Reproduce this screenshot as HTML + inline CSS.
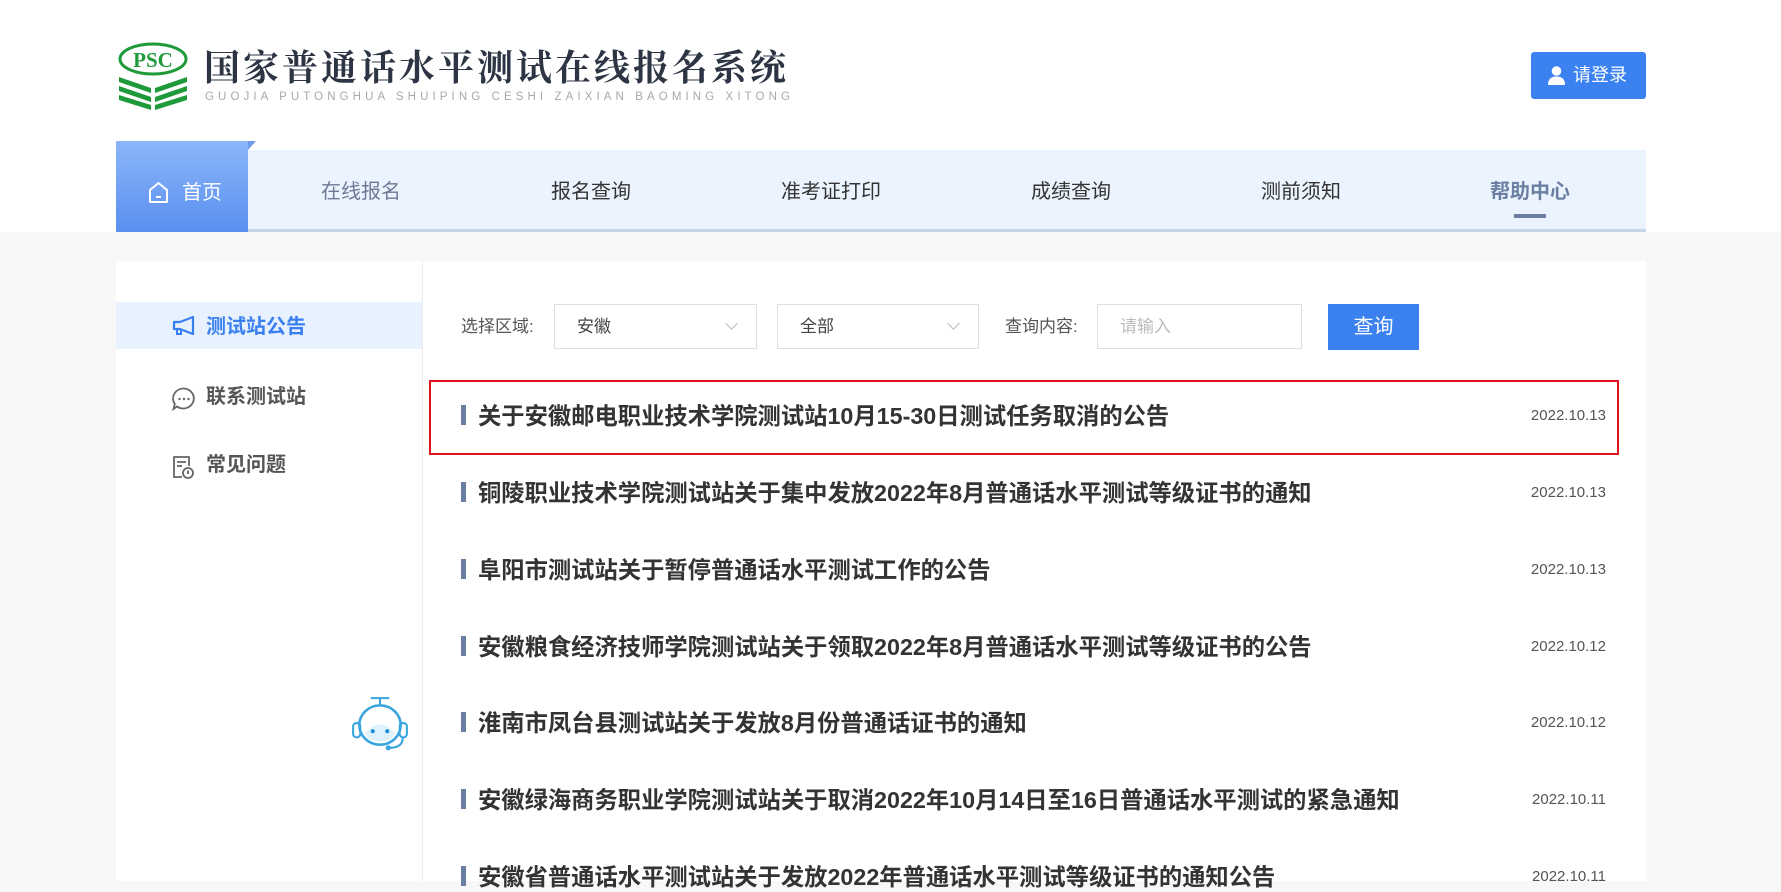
<!DOCTYPE html>
<html><head><meta charset="utf-8"><style>
*{margin:0;padding:0;box-sizing:border-box}
body{width:1781px;height:865px;overflow:hidden;background:#f7f7f7;font-family:"Liberation Sans","Noto Sans CJK SC",sans-serif;position:relative}
.hdr{position:absolute;left:0;top:0;width:1781px;height:232px;background:#fff}
.abs{position:absolute}
.title{left:204px;top:46px;font-family:"Liberation Serif","Noto Serif CJK SC",serif;font-size:36px;font-weight:bold;letter-spacing:3px;color:#2d3545;white-space:nowrap;line-height:44px}
.sub{left:205px;top:91px;font-size:11.5px;letter-spacing:4.1px;color:#a8a8a8;white-space:nowrap;line-height:12px}
.login{left:1531px;top:52px;width:115px;height:47px;background:#3b82f0;border-radius:3px;color:#fff;font-size:18px;line-height:47px;padding-left:42px}
.nav{left:116px;top:150px;width:1530px;height:82px;background:#ebf4fe;border-bottom:3px solid #c6d6e8}
.home{left:116px;top:141px;width:132px;height:91px;background:linear-gradient(#8cb6f9,#5a8ff0);color:#fff;font-size:20px}
.ni{position:absolute;top:177px;font-size:20px;color:#333;transform:translateX(-50%);white-space:nowrap;line-height:30px}
.card{left:116px;top:261px;width:1530px;height:620px;background:#fff}
.side{left:116px;top:261px;width:307px;height:620px;border-right:1px solid #ececec}
.si{position:absolute;left:0;width:306px;height:47px;font-size:20px;font-weight:bold;color:#555;line-height:47px;padding-left:90px}
.si svg{position:absolute;left:56px;top:13px}
.lbl{font-size:17px;color:#555;line-height:45px;top:304px}
.sel{top:304px;height:45px;border:1px solid #dcdfe6;font-size:17px;color:#444;line-height:43px;padding-left:22px}
.sel i{position:absolute;right:20px;top:14px;width:9px;height:9px;border-right:1px solid #bbb;border-bottom:1px solid #bbb;transform:rotate(45deg)}
.row{position:absolute;left:461px;width:1145px;height:30px}
.row b.bar{position:absolute;left:0;top:5px;width:5px;height:20px;background:#6b7fa3}
.row span{position:absolute;left:17px;top:1px;font-size:23.3px;font-weight:bold;color:#333;line-height:30px;white-space:nowrap}
.row em{position:absolute;right:0;top:6px;font-style:normal;font-size:15px;color:#555;line-height:20px}
</style></head><body>
<div class="hdr"></div>
<svg class="abs" style="left:117px;top:42px" width="72" height="68" viewBox="0 0 72 68">
<ellipse cx="36" cy="17" rx="33" ry="15" fill="none" stroke="#1f9a3a" stroke-width="3"/>
<text x="36" y="25" text-anchor="middle" font-family="Liberation Serif,serif" font-weight="bold" font-size="21" fill="#1f9a3a">PSC</text>
<g fill="#1f9a3a">
<path d="M2 35 L34 46 L34 51 L2 40Z"/><path d="M70 35 L38 46 L38 51 L70 40Z"/>
<path d="M2 44 L34 55 L34 60 L2 49Z"/><path d="M70 44 L38 55 L38 60 L70 49Z"/>
<path d="M2 53 L34 63 L34 68 L2 58Z"/><path d="M70 53 L38 63 L38 68 L70 58Z"/>
</g></svg>
<div class="abs title">国家普通话水平测试在线报名系统</div>
<div class="abs sub">GUOJIA PUTONGHUA SHUIPING CESHI ZAIXIAN BAOMING XITONG</div>
<div class="abs login"><svg class="abs" style="left:17px;top:14px" width="17" height="19" viewBox="0 0 17 19"><circle cx="8.5" cy="5" r="4.8" fill="#fff"/><path d="M0 19 Q0 10.5 8.5 10.5 Q17 10.5 17 19Z" fill="#fff"/></svg>请登录</div>
<div class="abs nav"></div>
<div class="abs home">
<div class="abs" style="right:-8px;top:0;width:0;height:0;border-left:8px solid #6f9ae8;border-bottom:9px solid transparent"></div>
<svg class="abs" style="left:32px;top:40px" width="21" height="23" viewBox="0 0 21 23"><path d="M2 9 L10.5 2 L19 9 V21 H2Z" fill="none" stroke="#fff" stroke-width="2" stroke-linejoin="round"/><path d="M8 16H13" stroke="#fff" stroke-width="2"/></svg>
<span class="abs" style="left:66px;top:37px;line-height:30px">首页</span></div>
<div class="ni" style="left:361px;color:#6d7a96">在线报名</div>
<div class="ni" style="left:591px">报名查询</div>
<div class="ni" style="left:831px">准考证打印</div>
<div class="ni" style="left:1071px">成绩查询</div>
<div class="ni" style="left:1301px">测前须知</div>
<div class="ni" style="left:1530px;color:#6b7fa3;font-weight:bold">帮助中心</div>
<div class="abs" style="left:1514px;top:214px;width:32px;height:4px;background:#6b7fa3"></div>
<div class="abs card"></div>
<div class="abs side">
<div class="si" style="top:41px;background:#e8f1fe;color:#3a7ff0;line-height:50px"><svg width="24" height="22" viewBox="0 0 24 22"><path d="M2 7 H8 L21 2 V19 L8 14 H2Z" fill="none" stroke="#3a7ff0" stroke-width="2.2" stroke-linejoin="round"/><path d="M5 14 V19 H9 V15" fill="none" stroke="#3a7ff0" stroke-width="2"/></svg>测试站公告</div>
<div class="si" style="top:113px"><svg width="24" height="24" viewBox="0 0 24 24"><path d="M12 1.5 A10.5 10 0 1 1 5 19.5 L1.5 22 L2.8 17 A10.5 10 0 0 1 12 1.5Z" fill="none" stroke="#666" stroke-width="1.8"/><circle cx="7.5" cy="12" r="1.2" fill="#666"/><circle cx="12" cy="12" r="1.2" fill="#666"/><circle cx="16.5" cy="12" r="1.2" fill="#666"/></svg>联系测试站</div>
<div class="si" style="top:181px"><svg width="22" height="24" viewBox="0 0 22 24"><path d="M10 22 H2 V2 H17 V11" fill="none" stroke="#666" stroke-width="1.8"/><path d="M5 7H14M5 11H10" stroke="#666" stroke-width="1.8"/><circle cx="16" cy="18" r="5" fill="none" stroke="#666" stroke-width="1.8"/><path d="M16 15.5V19" stroke="#666" stroke-width="1.8"/></svg>常见问题</div>
</div>
<svg class="abs" style="left:347px;top:694px" width="66" height="60" viewBox="0 0 62 58">
<path d="M22 4 H40 M31 4 V10" stroke="#3aa6dd" stroke-width="2"/>
<ellipse cx="31" cy="30" rx="20" ry="19" fill="#fff" stroke="#3aa6dd" stroke-width="2.5"/>
<path d="M17 37 Q31 22 45 37 Q45 45 31 46 Q17 45 17 37Z" fill="#dff1fb"/>
<circle cx="24" cy="36" r="2" fill="#1d8fd0"/><circle cx="38" cy="36" r="2" fill="#1d8fd0"/>
<rect x="5" y="28" width="7" height="14" rx="3.5" fill="none" stroke="#3aa6dd" stroke-width="2"/>
<rect x="50" y="28" width="7" height="14" rx="3.5" fill="none" stroke="#3aa6dd" stroke-width="2"/>
<path d="M53 42 Q53 52 40 52" fill="none" stroke="#3aa6dd" stroke-width="2"/><circle cx="39" cy="52" r="2.5" fill="#3aa6dd"/>
</svg>
<div class="abs lbl" style="left:461px">选择区域:</div>
<div class="abs sel" style="left:554px;width:203px">安徽<i></i></div>
<div class="abs sel" style="left:777px;width:202px">全部<i></i></div>
<div class="abs lbl" style="left:1005px">查询内容:</div>
<div class="abs sel" style="left:1097px;width:205px;color:#bbb">请输入</div>
<div class="abs" style="left:1328px;top:304px;width:91px;height:46px;background:#3b82f0;color:#fff;font-size:20px;line-height:46px;text-align:center">查询</div>
<div class="abs" style="left:429px;top:380px;width:1190px;height:75px;border:2.5px solid #e3101b"></div>
<div class="row" style="top:400px"><b class="bar"></b><span>关于安徽邮电职业技术学院测试站10月15-30日测试任务取消的公告</span><em>2022.10.13</em></div>
<div class="row" style="top:477px"><b class="bar"></b><span>铜陵职业技术学院测试站关于集中发放2022年8月普通话水平测试等级证书的通知</span><em>2022.10.13</em></div>
<div class="row" style="top:554px"><b class="bar"></b><span>阜阳市测试站关于暂停普通话水平测试工作的公告</span><em>2022.10.13</em></div>
<div class="row" style="top:631px"><b class="bar"></b><span>安徽粮食经济技师学院测试站关于领取2022年8月普通话水平测试等级证书的公告</span><em>2022.10.12</em></div>
<div class="row" style="top:707px"><b class="bar"></b><span>淮南市凤台县测试站关于发放8月份普通话证书的通知</span><em>2022.10.12</em></div>
<div class="row" style="top:784px"><b class="bar"></b><span>安徽绿海商务职业学院测试站关于取消2022年10月14日至16日普通话水平测试的紧急通知</span><em>2022.10.11</em></div>
<div class="row" style="top:861px"><b class="bar"></b><span>安徽省普通话水平测试站关于发放2022年普通话水平测试等级证书的通知公告</span><em>2022.10.11</em></div>
</body></html>
